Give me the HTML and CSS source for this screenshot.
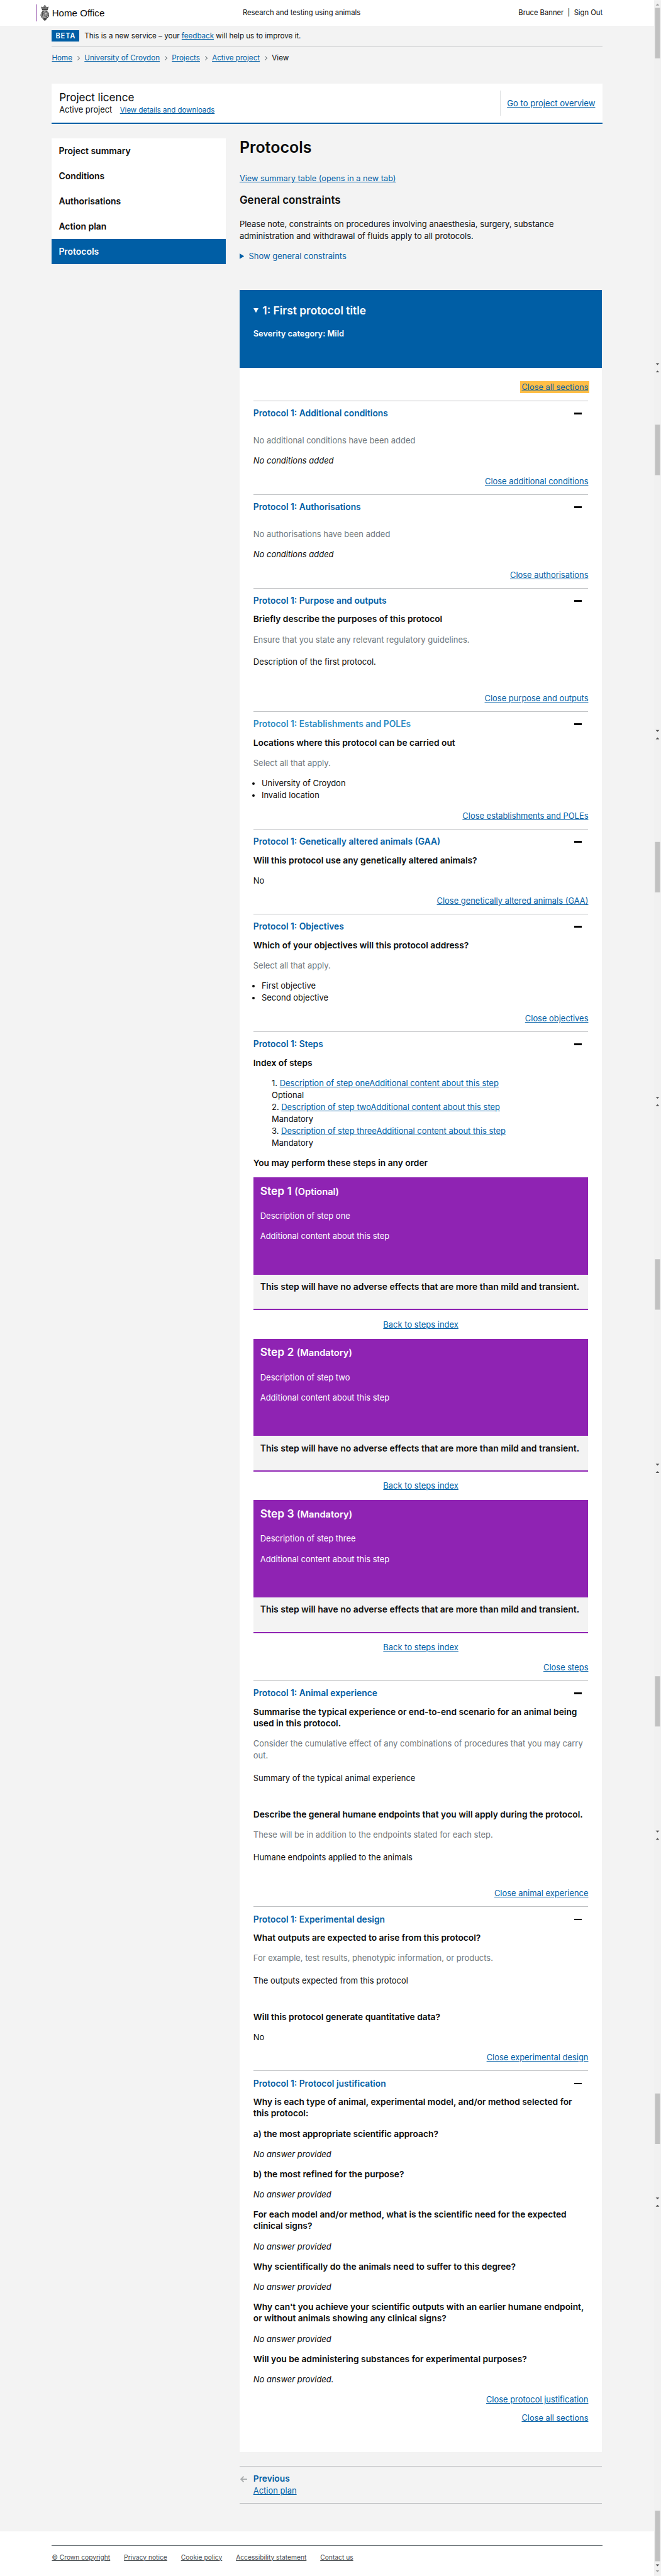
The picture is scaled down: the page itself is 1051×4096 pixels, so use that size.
FILE: index.html
```html
<!DOCTYPE html>
<html lang="en"><head><meta charset="utf-8"><title>Protocols</title><link rel="stylesheet" href="styles.css"></head>
<body>
<div class="frame">
<div class="page">
<header class="header">
<div class="logo">
<svg class="crest" viewBox="0 0 20 35" width="20" height="35"><path d="M2.500 4l3 1.500L8 3.500l2 .8 2-.8 2.500 2L17.500 4l-1.800 6.500H4.300z" fill="#777"/><ellipse cx="10" cy="21.500" rx="9" ry="9" fill="#b5b5b5"/><g fill="none" stroke="#222"><path d="M10 0v5M8.300 1.500h3.400M2.500 4l2 6.500h11l2-6.500-3 1.500-2.500-2-2 1-2-1-2.500 2z"/><path d="M4 10.500h12M5 13h10" stroke-width="1.400"/><ellipse cx="10" cy="21.500" rx="8.500" ry="8.500" stroke-width="1.600" stroke-dasharray="2 .7"/><path d="M4.800 16.500h10.400v6.500q0 4-5.200 6-5.200-2-5.200-6z" fill="#e6e6e6"/><path d="M10 17v12M5 22h10"/><path d="M6 18.500h3M6 20.300h3M11.500 19.500h3M6.500 24.500h3M12 23.500v3M13.500 23.500v3"/><path d="M6.500 31h7l-3.500 3z" fill="#555"/></g></svg>
<span>Home Office</span></div>
<div>Research and testing using animals</div>
<div>Bruce Banner&nbsp; |&nbsp; Sign Out</div>
</header>
<main class="main">
<div class="phase"><strong class="beta">BETA</strong><span>This is a new service – your <a>feedback</a> will help us to improve it.</span></div>
<nav class="crumbs"><a>Home</a><i></i><a>University of Croydon</a><i></i><a>Projects</a><i></i><a>Active project</a><i></i><span>View</span></nav>
<section class="licence">
<div><h2>Project licence</h2><p>Active project<a>View details and downloads</a></p></div>
<div class="overview"><a>Go to project overview</a></div>
</section>
<div class="columns">
<nav class="side"><div>Project summary</div><div>Conditions</div><div>Authorisations</div><div>Action plan</div><div class="active">Protocols</div></nav>
<div class="content">
<h1>Protocols</h1>
<p class="summary"><a>View summary table (opens in a new tab)</a></p>
<h2 class="general">General constraints</h2>
<p class="note">Please note, constraints on procedures involving anaesthesia, surgery, substance administration and withdrawal of fluids apply to all protocols.</p>
<p class="show"><svg width="10" height="12" viewBox="0 0 10 12"><path d="M0 0l10 6-10 6z" fill="#005ea5"/></svg>Show general constraints</p>
<div class="banner"><h2><svg width="11" height="10" viewBox="0 0 11 10"><path d="M0 0h11l-5.500 10z" fill="#fff"/></svg>1: First protocol title</h2><p>Severity category: Mild</p></div>
<div class="panel">
<p class="all top"><a class="focus">Close all sections</a></p>

<section><h3>Protocol 1: Additional conditions</h3>
<p class="hint gap">No additional conditions have been added</p><p class="none">No conditions added</p>
<p class="close"><a>Close additional conditions</a></p></section>

<section><h3>Protocol 1: Authorisations</h3>
<p class="hint gap">No authorisations have been added</p><p class="none">No conditions added</p>
<p class="close"><a>Close authorisations</a></p></section>

<section><h3>Protocol 1: Purpose and outputs</h3>
<h4>Briefly describe the purposes of this protocol</h4><p class="hint">Ensure that you state any relevant regulatory guidelines.</p><p class="answer">Description of the first protocol.</p>
<p class="close"><a>Close purpose and outputs</a></p></section>

<section><h3 class="hover">Protocol 1: Establishments and POLEs</h3>
<h4>Locations where this protocol can be carried out</h4><p class="hint">Select all that apply.</p>
<ul><li>University of Croydon</li><li>Invalid location</li></ul>
<p class="close"><a>Close establishments and POLEs</a></p></section>

<section><h3>Protocol 1: Genetically altered animals (GAA)</h3>
<h4>Will this protocol use any genetically altered animals?</h4><p>No</p>
<p class="close"><a>Close genetically altered animals (GAA)</a></p></section>

<section><h3>Protocol 1: Objectives</h3>
<h4>Which of your objectives will this protocol address?</h4><p class="hint">Select all that apply.</p>
<ul><li>First objective</li><li>Second objective</li></ul>
<p class="close"><a>Close objectives</a></p></section>

<section><h3>Protocol 1: Steps</h3>
<h4>Index of steps</h4>
<div class="index">1. <a>Description of step oneAdditional content about this step</a><br>Optional<br>2. <a>Description of step twoAdditional content about this step</a><br>Mandatory<br>3. <a>Description of step threeAdditional content about this step</a><br>Mandatory</div>
<h4 class="order">You may perform these steps in any order</h4>
<article class="step"><div class="body"><h3>Step 1 <small>(Optional)</small></h3><p>Description of step one</p><p>Additional content about this step</p></div><div class="effects">This step will have no adverse effects that are more than mild and transient.</div></article>
<p class="back"><a>Back to steps index</a></p>
<article class="step"><div class="body"><h3>Step 2 <small>(Mandatory)</small></h3><p>Description of step two</p><p>Additional content about this step</p></div><div class="effects">This step will have no adverse effects that are more than mild and transient.</div></article>
<p class="back"><a>Back to steps index</a></p>
<article class="step"><div class="body"><h3>Step 3 <small>(Mandatory)</small></h3><p>Description of step three</p><p>Additional content about this step</p></div><div class="effects">This step will have no adverse effects that are more than mild and transient.</div></article>
<p class="back"><a>Back to steps index</a></p>
<p class="close"><a>Close steps</a></p></section>

<section><h3>Protocol 1: Animal experience</h3>
<h4>Summarise the typical experience or end-to-end scenario for an animal being used in this protocol.</h4><p class="hint">Consider the cumulative effect of any combinations of procedures that you may carry out.</p><p class="answer">Summary of the typical animal experience</p>
<h4>Describe the general humane endpoints that you will apply during the protocol.</h4><p class="hint">These will be in addition to the endpoints stated for each step.</p><p class="answer">Humane endpoints applied to the animals</p>
<p class="close"><a>Close animal experience</a></p></section>

<section><h3>Protocol 1: Experimental design</h3>
<h4>What outputs are expected to arise from this protocol?</h4><p class="hint">For example, test results, phenotypic information, or products.</p><p class="answer">The outputs expected from this protocol</p>
<h4>Will this protocol generate quantitative data?</h4><p>No</p>
<p class="close"><a>Close experimental design</a></p></section>

<section><h3>Protocol 1: Protocol justification</h3>
<h4>Why is each type of animal, experimental model, and/or method selected for this protocol:</h4>
<h4>a) the most appropriate scientific approach?</h4><p class="none">No answer provided</p>
<h4>b) the most refined for the purpose?</h4><p class="none">No answer provided</p>
<h4>For each model and/or method, what is the scientific need for the expected clinical signs?</h4><p class="none">No answer provided</p>
<h4>Why scientifically do the animals need to suffer to this degree?</h4><p class="none">No answer provided</p>
<h4>Why can't you achieve your scientific outputs with an earlier humane endpoint, or without animals showing any clinical signs?</h4><p class="none">No answer provided</p>
<h4>Will you be administering substances for experimental purposes?</h4><p class="none">No answer provided.</p>
<p class="close"><a>Close protocol justification</a></p></section>
<p class="all"><a>Close all sections</a></p>
</div>
<nav class="previous"><svg width="15" height="14" viewBox="0 0 15 14"><path d="M15 7H2M7.500 1L1.500 7l6 6" fill="none" stroke="#a9acad" stroke-width="2.500"/></svg><div><strong>Previous</strong><br><a>Action plan</a></div></nav>
</div></div>
</main>
<footer class="footer"><div><a>© Crown copyright</a><a>Privacy notice</a><a>Cookie policy</a><a>Accessibility statement</a><a>Contact us</a></div></footer>
</div>
<svg class="rail" width="15" height="5613" viewBox="0 0 15 5613"><path fill="#f1f1f1" d="M0 0h15v5613H0z"/><path fill="#c1c1c1" d="M2 15h11v110H2zM2 924h11v110H2zM2 1834h11v110H2zM2 2744h11v110H2zM2 3653h11v110H2zM2 4563h11v110H2zM2 5473h11v110H2z"/><path fill="#a3a3a3" d="M3.500 10h8l-4-4zM3.500 5603h8l-4 4z"/><path fill="#505050" d="M3.500 790h8l-4 4zM3.500 810h8l-4-4zM3.500 1590h8l-4 4zM3.500 1610h8l-4-4zM3.500 2390h8l-4 4zM3.500 2410h8l-4-4zM3.500 3190h8l-4 4zM3.500 3210h8l-4-4zM3.500 3990h8l-4 4zM3.500 4010h8l-4-4zM3.500 4790h8l-4 4zM3.500 4810h8l-4-4zM3.500 5590h8l-4 4z"/></svg>
</div>
</body></html>
```
FILE: styles.css
```css
body { margin: 0; background: #f3f3f3; }
.frame { zoom: 0.7297; width: 1440px; height: 5613px; overflow: hidden; display: flex; font: 17.8px/26px Inter, sans-serif; color: #0b0c0c; }
h1, h2, h3, h4, p, ul { margin: 0; font-size: inherit; font-weight: 600; }
p, ul { font-weight: 400; }
a { color: #005ea5; text-decoration: underline; }
.page { width: 1425px; flex: none; }
.rail { flex: none; display: block; }

.header { height: 56px; background: #fff; display: grid; grid-template-columns: 450px 1fr auto; align-items: center; padding: 0 112px 0 79px; box-sizing: border-box; font-size: 15.4px; }
.logo { display: flex; align-items: center; height: 36px; border-left: 2px solid #8f4ba8; font: 20.7px "Liberation Sans", sans-serif; box-sizing: border-box; }
.crest { margin: 0 6px 0 7px; }

.main { height: 5460px; box-sizing: border-box; padding: 0 112px 0 113px; }
.phase { display: flex; align-items: center; height: 45px; border-bottom: 1px solid #bfc1c3; font-size: 15.88px; }
.beta { background: #005ea5; color: #fff; width: 60px; line-height: 25px; text-align: center; letter-spacing: 1px; margin-right: 11px; font-weight: 600; font-size: 15.4px; }
.crumbs { display: flex; align-items: center; height: 48px; font-size: 15.96px; }
.crumbs i { width: 6px; height: 6px; border: solid #6f777b; border-width: 1px 1px 0 0; transform: rotate(45deg); margin: 0 11px 0 8px; }

.licence { margin-top: 32px; height: 85px; background: #fff; border-bottom: 4px solid #005ea5; display: flex; justify-content: space-between; align-items: center; padding: 0 16px; }
.licence h2 { font-size: 23.4px; font-weight: 400; line-height: 32px; }
.licence p { font-size: 17.68px; }
.licence p a { font-size: 15.67px; margin-left: 17px; }
.overview { border-left: 1px solid #dee0e2; padding-left: 14px; line-height: 55px; font-size: 18px; }

.columns { display: flex; align-items: flex-start; margin-top: 31px; gap: 30px; }
.side { width: 379px; flex: none; background: #fff; font-weight: 600; font-size: 19.1px; line-height: 55px; }
.side div { padding-left: 15px; }
.side .active { background: #005ea5; color: #fff; }
.content { width: 790px; }
h1 { font-size: 34.25px; line-height: 40px; }
.summary { margin-top: 36.5px; font-size: 17.5px; }
.general { font-size: 23.3px; line-height: 30px; margin-top: 18px; }
.note { margin-top: 24px; }
.show { color: #005ea5; margin-top: 17.5px; }
.show svg { margin-right: 10px; }
.banner { background: #005ea5; color: #fff; height: 170px; margin-top: 60.5px; padding: 30px 30px 0; box-sizing: border-box; }
.banner h2 { font-size: 23.8px; line-height: 30px; }
.banner svg { margin-right: 9px; vertical-align: 3px; }
.banner p { font-weight: 600; font-size: 17.6px; margin-top: 24px; }

.panel { background: #fff; padding: 0 30px 59.5px; }
.all { text-align: right; margin-top: 0.5px; font-size: 17.6px; }
.all.top { padding: 30px 0 15px; margin: 0; }
.focus { background: #ffbf47; outline: 3px solid #ffbf47; }
section > h3 { border-top: 1px solid #bfc1c3; padding: 14px 0 0; color: #005ea5; display: flex; justify-content: space-between; align-items: center; margin-bottom: 14.5px; font-size: 18.95px; }
section > h3::after { content: ""; width: 17px; height: 4px; background: #000; margin-right: 14px; }
section > h3.hover { color: #2b8cc4; }
h4 { line-height: 25px; margin-bottom: 19.2px; font-size: 18.88px; }
.hint { color: #6f777b; }
.gap { padding-top: 18.5px; }
.none { font-style: italic; margin-top: 18.5px; }
h4 + .none { margin-top: 0; }
.none + h4 { margin-top: 18px; }
.answer { margin: 23px 0 53px; }
.close { text-align: right; margin: 18.5px 0 15px; font-size: 17.7px; }
ul { margin-top: 18px; padding-left: 18px; line-height: 26.2px; }
.index { padding-left: 40px; line-height: 26.2px; }
.order { margin: 17.5px 0 18.5px; }
.body { background: #8f23b3; color: #fff; height: 212px; box-sizing: border-box; padding: 14.5px 15px; }
.body h3 { font-size: 23.9px; line-height: 30px; margin-bottom: 27px; }
.body small { font-size: 20.1px; line-height: 1; }
.body p + p { margin-top: 18px; }
.effects { background: #f3f3f3; height: 77.5px; border-bottom: 4px solid #8f23b3; padding: 14px 15px 0; box-sizing: border-box; font-weight: 600; font-size: 19.1px; }
.back { text-align: center; margin: 18.2px 0 18px; }

.previous { margin-top: 30px; border: solid #bfc1c3; border-width: 1px 0; padding: 14px 0; display: flex; }
.previous svg { margin: 7px 13px 0 2px; }
.previous strong { color: #005ea5; font-weight: 600; font-size: 18.85px; }
.footer { background: #fff; height: 97px; padding: 30px 112px 0 113px; box-sizing: border-box; }
.footer div { border-top: 1px solid #6f777b; display: flex; gap: 30px; padding-top: 12px; font-size: 14.05px; }
.footer a { color: #454a4d; }
```
